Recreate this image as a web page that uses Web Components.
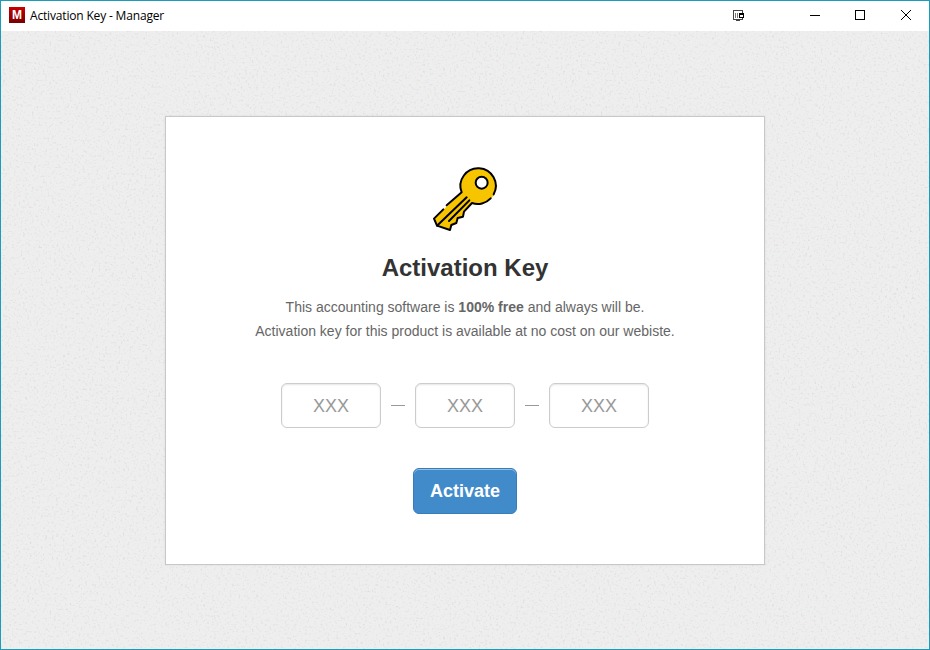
<!DOCTYPE html>
<html lang="en">
<head>
<meta charset="utf-8">
<title>Activation Key - Manager</title>
<style>
html, body { margin: 0; height: 100%; overflow: hidden; }
body { font-family: "Liberation Sans", Arial, sans-serif; }
</style>
</head>
<body>
<app-window>
  <title-bar slot="bar">Activation Key - Manager</title-bar>
  <activation-card>
    <key-icon slot="icon"></key-icon>
    <span slot="heading">Activation Key</span>
    <span slot="line1">This accounting software is <b>100% free</b> and always will be.</span>
    <span slot="line2">Activation key for this product is available at no cost on our webiste.</span>
    <key-fields slot="fields"></key-fields>
    <primary-button slot="action">Activate</primary-button>
  </activation-card>
</app-window>
<script>
const define = (name, html) => customElements.define(name, class extends HTMLElement {
  constructor() {
    super();
    this.attachShadow({ mode: 'open' }).innerHTML = html;
  }
});

define('app-window', `
<style>
:host { display: flex; flex-direction: column; box-sizing: border-box; width: 930px; height: 650px; border: 1px solid #1a9cba; background: #fff; }
main { flex: 1; display: grid; justify-items: center; align-items: start; background: #ededed; overflow: hidden; }
main > * { grid-area: 1 / 1; }
svg { display: block; }
.content { padding-top: 85px; z-index: 1; }
</style>
<slot name="bar"></slot>
<main>
  <svg width="928" height="619" aria-hidden="true">
    <filter id="grain" x="0" y="0" width="100%" height="100%" color-interpolation-filters="sRGB">
      <feTurbulence type="fractalNoise" baseFrequency="0.45" numOctaves="2" seed="8"/>
      <feColorMatrix values="1 0 0 0 .1  0 1 0 0 .1  0 0 1 0 .1  0 0 0 5 -2.7"/>
    </filter>
    <rect width="928" height="619" fill="#eeeeee"/>
    <rect width="928" height="619" filter="url(#grain)" opacity=".1"/>
  </svg>
  <div class="content"><slot></slot></div>
</main>`);

define('title-bar', `
<style>
:host { display: flex; align-items: center; flex: none; height: 30px; box-sizing: border-box; padding: 0 17px 2px 8px; background: #fff; color: #000; font: 12px/16px "Open Sans", "Noto Sans", sans-serif; }
.logo { flex: none; margin-right: 5px; width: 16px; height: 16px; background: linear-gradient(#c80000, #780000); color: #fff; font: bold 12px/16px "Liberation Sans", sans-serif; text-align: center; }
.title { flex: 1; padding-top: 2px; letter-spacing: -.17px; white-space: nowrap; }
svg { flex: none; display: block; }
</style>
<div class="logo">M</div><span class="title"><slot></slot></span>
<svg width="180" height="14" viewBox="0 0 180 14" fill="none" stroke="#000" shape-rendering="crispEdges">
  <path stroke="#444" d="M1.5 2.5h9v9h-9zM4 12.500h4"/>
  <path stroke="#777" d="M3.500 5v5M5.500 5v5M7.500 5v5"/>
  <path fill="#fff" d="M7.500 5.500h4v4h-4zM7 6.500h5"/>
  <path d="M78 7.500h10M123.500 2.500h9v9h-9z"/>
  <path d="M169 2l10 10M179 2l-10 10" shape-rendering="auto"/>
</svg>`);

define('activation-card', `
<style>
:host { display: flex; flex-direction: column; align-items: center; box-sizing: border-box; width: 600px; height: 449px; padding-top: 43px; border: 1px solid #c8c8c8; background: #fff; box-shadow: 0 0 2px rgba(0,0,0,.08); }
h1 { margin: 14px 0 0; font-size: 24px; line-height: 28px; font-weight: bold; color: #333; white-space: nowrap; }
p { margin: 0; font-size: 14px; line-height: 24px; color: #666; text-align: center; white-space: nowrap; }
h1 + p { margin-top: 13px; }
.fields { margin-top: 40px; }
.action { margin-top: 40px; }
</style>
<slot name="icon"></slot>
<h1><slot name="heading"></slot></h1>
<p><slot name="line1"></slot></p>
<p><slot name="line2"></slot></p>
<div class="fields"><slot name="fields"></slot></div>
<div class="action"><slot name="action"></slot></div>`);

define('key-icon', `
<style>:host { display: block; width: 80px; height: 80px; } svg { display: block; }</style>
<svg width="80" height="80" viewBox="1 -2 240 240" fill="none" stroke-linecap="round" stroke-linejoin="round">
  <path fill="#f6c500" fill-rule="evenodd" d="M111 95A53 53 0 1 1 142 127L118 153 115 168 99 172 95 187 80 193 76 208 37 195 28 174ZM153 66a18 18 0 1 0 36 0a18 18 0 1 0-36 0"/>
  <g stroke="#000" stroke-width="6">
    <path d="M66 134L111 95A53 53 0 1 1 207 101M198 113A53 53 0 0 1 142 127L118 153 115 168 99 172 95 187 80 193 76 208 37 195 28 174 56 146"/>
    <path d="M37 195L126 110M73 181L134 119"/>
    <circle cx="171" cy="66" r="18"/>
  </g>
</svg>`);

define('key-fields', `
<style>
:host { display: flex; align-items: center; gap: 10px; }
i { display: block; width: 14px; height: 1px; background: #999; }
</style>
<key-field></key-field><i></i><key-field></key-field><i></i><key-field></key-field>`);

define('key-field', `
<style>
:host { display: block; width: 100px; height: 45px; }
input { display: block; box-sizing: border-box; width: 100%; height: 100%; margin: 0; padding: 2px 0 0; border: 1px solid #ccc; border-radius: 6px; background: #fff; box-shadow: inset 0 1px 2px rgba(0,0,0,.1); font: 18px "Liberation Sans", Arial, sans-serif; text-align: center; outline: 0; }
input::placeholder { color: #999; opacity: 1; }
</style>
<input type="text" placeholder="XXX" maxlength="3">`);

define('primary-button', `
<style>
:host { display: block; width: 104px; height: 46px; }
button { display: block; box-sizing: border-box; width: 100%; height: 100%; margin: 0; padding: 0; border: 1px solid #357ebd; border-radius: 6px; background: #428bca; color: #fff; font: bold 18px/44px "Liberation Sans", Arial, sans-serif; box-shadow: inset 0 1px 0 rgba(255,255,255,.45); white-space: nowrap; }
</style>
<button type="button"><slot></slot></button>`);
</script>
</body>
</html>
